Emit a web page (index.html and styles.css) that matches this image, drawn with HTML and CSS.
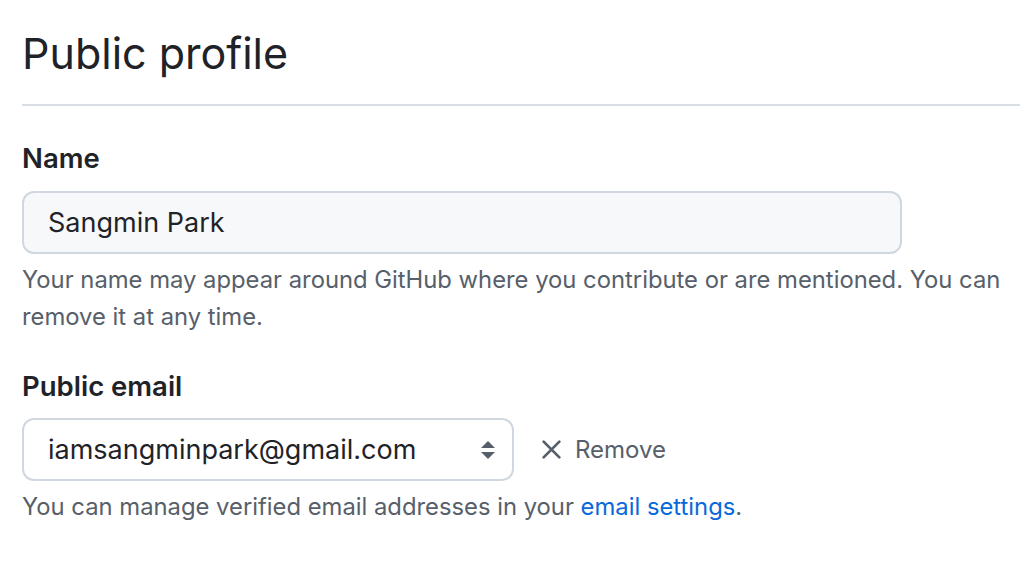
FILE: index.html
```html
<!DOCTYPE html>
<html>
<head>
<meta charset="utf-8">
<link rel="stylesheet" href="styles.css">
</head>
<body>
<div class="page">
  <h2 class="title">Public profile</h2>
  <div class="group">
    <label class="label">Name</label>
    <div class="input">Sangmin Park</div>
    <p class="note">Your name may appear around GitHub where you contribute or are mentioned. You can remove it at any time.</p>
  </div>
  <div class="group">
    <label class="label label-email">Public email</label>
    <div class="row">
      <div class="select">
        <span>iamsangminpark@gmail.com</span>
        <svg class="caret" width="16" height="20" viewBox="0 0 16 20"><path d="M8 1 L15 8 H1 Z" fill="#57606a"/><path d="M8 19 L15 12 H1 Z" fill="#57606a"/></svg>
      </div>
      <button class="remove">
        <svg width="21" height="21" viewBox="0 0 20 20"><path d="M2.5 2.5 L17.5 17.5 M17.5 2.5 L2.5 17.5" stroke="#57606a" stroke-width="2.6" stroke-linecap="round"/></svg>
        <span>Remove</span>
      </button>
    </div>
    <p class="note note-email">You can manage verified email addresses in your <a href="#">email settings</a>.</p>
  </div>
</div>
</body>
</html>
```
FILE: styles.css
```css
html, body {
  margin: 0;
  padding: 0;
  background: #ffffff;
}
body {
  font-family: Inter, "Noto Sans", sans-serif;
  color: #1f2328;
}
.page {
  padding: 0 0 0 22px;
}
.title {
  margin: 0;
  padding-top: 24px;
  padding-bottom: 22px;
  font-size: 43px;
  font-weight: 400;
  line-height: 58px;
  border-bottom: 2px solid #d8dee4;
}
.group {
  margin-top: 34px;
}
.group + .group {
  margin-top: 33px;
}
.label {
  display: block;
  font-size: 27.5px;
  font-weight: 600;
  line-height: 36px;
  margin-bottom: 15px;
}
.label-email {
  margin-bottom: 14px;
}
.input {
  box-sizing: border-box;
  width: 880px;
  height: 63px;
  border: 2px solid #d0d7de;
  border-radius: 12px;
  background: #f6f8fa;
  padding: 0 24px;
  font-size: 27px;
  line-height: 59px;
  color: #1f2328;
}
.note {
  margin: 7px 0 0 0;
  font-size: 23.8px;
  line-height: 37px;
  color: #57606a;
}
.note-email {
  margin-top: 7px;
}
.note a {
  color: #0969da;
  text-decoration: none;
}
.row {
  display: flex;
  align-items: center;
}
.select {
  box-sizing: border-box;
  width: 492px;
  height: 63px;
  border: 2px solid #d0d7de;
  border-radius: 12px;
  background: #ffffff;
  padding: 0 16px 0 24px;
  display: flex;
  align-items: center;
  justify-content: space-between;
  font-size: 27px;
  color: #1f2328;
}
.remove {
  margin-left: 27px;
  display: flex;
  align-items: center;
  gap: 13px;
  background: none;
  border: none;
  padding: 0;
  font-family: inherit;
  font-size: 24px;
  color: #57606a;
}
```
